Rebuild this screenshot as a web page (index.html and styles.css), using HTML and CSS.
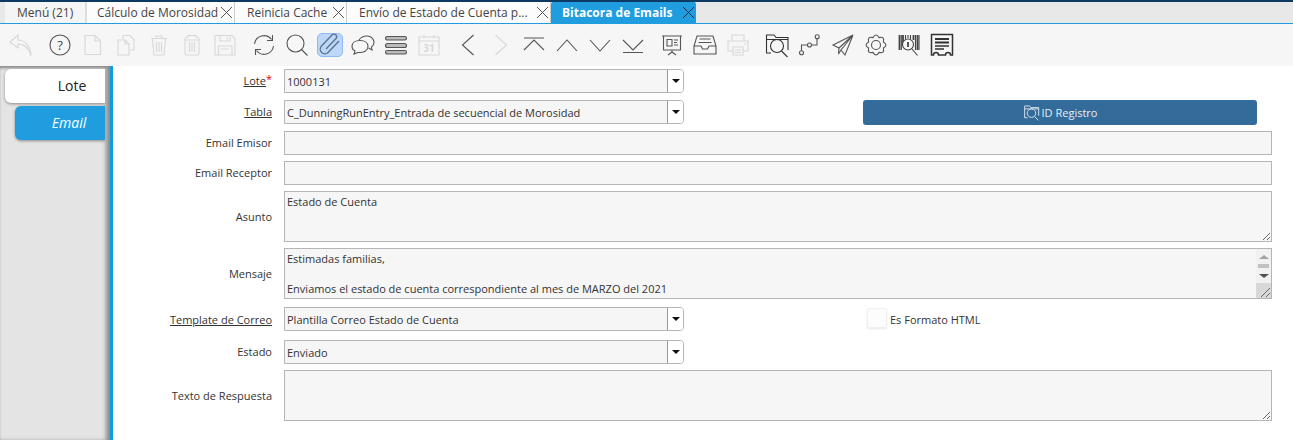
FILE: index.html
```html
<!DOCTYPE html>
<html lang="es">

<head>
    <meta charset="UTF-8">
    <title>Bitacora de Emails</title>
    <link rel="stylesheet" href="styles.css">
</head>

<body>
    <!-- pestañas -->
    <div class="tabs">
        <div class="tab tab-menu">Menú (21)</div>
        <div class="tab tab-a">Cálculo de Morosidad
            <svg class="close" viewBox="0 0 13 13"><path d="M1 1 L12 12 M12 1 L1 12" /></svg>
        </div>
        <div class="tab tab-b">Reinicia Cache
            <svg class="close" viewBox="0 0 13 13"><path d="M1 1 L12 12 M12 1 L1 12" /></svg>
        </div>
        <div class="tab tab-c">Envío de Estado de Cuenta p...
            <svg class="close" viewBox="0 0 13 13"><path d="M1 1 L12 12 M12 1 L1 12" /></svg>
        </div>
        <div class="tab current">Bitacora de Emails
            <svg class="close" viewBox="0 0 13 13"><path d="M1 1 L12 12 M12 1 L1 12" /></svg>
        </div>
    </div>

    <!-- barra de herramientas -->
    <div class="toolbar">
        <span class="slot"><svg class="ico off" viewBox="0 0 26 26"><path d="M10 3 L2 10 L10 16 V12 C16 12 21 16 23 24 C23 15 17 8 10 8 Z" /></svg></span>
        <span class="slot sep"><svg class="ico" viewBox="0 0 26 26"><circle cx="13" cy="13" r="10" /><text x="13" y="17.5" class="ico-q">?</text></svg></span>
        <span class="slot"><svg class="ico off" viewBox="0 0 26 26"><path d="M5 3.5 H15 L20.5 9 V22.5 H5 Z M15 3.5 V9 H20.5" /></svg></span>
        <span class="slot"><svg class="ico off" viewBox="0 0 26 26"><path d="M10 7 V3.5 H17 L21 7.5 V18 H17 M5 8 H12 L16 12 V23 H5 Z M12 8 V12 H16" /></svg></span>
        <span class="slot"><svg class="ico off" viewBox="0 0 26 26"><path d="M5 6.5 H21 M10 6 V4 H16 V6 M6.5 7 L8 23 H18 L19.5 7 M10.5 10 V20 M13 10 V20 M15.5 10 V20" /></svg></span>
        <span class="slot"><svg class="ico off" viewBox="0 0 26 26"><path d="M6 7 C6 5 8 5 9 5 V3.5 H17 V5 C18 5 20 5 20 7 V21 C20 22.5 19 23 18 23 H8 C7 23 6 22.5 6 21 Z M6 8 H20 M10.5 10 V20 M13 10 V20 M15.5 10 V20" /></svg></span>
        <span class="slot"><svg class="ico off" viewBox="0 0 26 26"><path d="M3 3.5 H20 L23 6.5 V23 H3 Z M8 3.5 V9 H18 V3.5 M15 5 V7.5 M6.5 14 H20 V23 H6.5 Z M9 17 H17" /></svg></span>
        <span class="slot sep"><svg class="ico" viewBox="0 0 26 26"><path d="M3.5 12 A9.5 9.5 0 0 1 20.5 7.5 M21.5 3 V8.5 H16 M22.5 14 A9.5 9.5 0 0 1 5.5 18.5 M4.5 23 V17.5 H10" /></svg></span>
        <span class="slot"><svg class="ico" viewBox="0 0 26 26"><circle cx="11.5" cy="11.5" r="8.5" /><path d="M17.5 17.5 L23.5 23.5" /></svg></span>
        <span class="slot active"><svg class="ico clip" viewBox="0 0 26 26"><path d="M9 17 L19 6.5 A2.6 2.6 0 0 0 15 3 L4.5 14 A4.6 4.6 0 0 0 11 20.5 L22 9" /></svg></span>
        <span class="slot"><svg class="ico" viewBox="0 0 26 26"><path d="M10 8.5 C5 8.5 2 11 2 14.5 C2 16.5 3 18 5 19 L4 22 L8 20.5 C14 21 18 18.5 18 14.5 C18 11 15 8.5 10 8.5 Z M9 8 C11 5 14 4 17 4 C21 4 24 7 24 10.5 C24 12.5 23 14 21.5 15 L22 18 L18.5 16" /></svg></span>
        <span class="slot"><svg class="ico bars" viewBox="0 0 26 26"><rect x="2.5" y="4.5" width="21" height="3.5" rx="1.7" /><rect x="2.5" y="11.5" width="21" height="4" rx="2" /><rect x="2.5" y="18.5" width="21" height="3.5" rx="1.7" /></svg></span>
        <span class="slot"><svg class="ico off" viewBox="0 0 26 26"><path d="M3 5 H23 V23 H3 Z M3 9 H23 M8 3 V6 M18 3 V6" /><text x="13" y="20" class="ico-cal">31</text></svg></span>
        <span class="slot sep"><svg class="ico" viewBox="0 0 26 26"><path d="M18.5 3 L7.5 13 L18.5 23" /></svg></span>
        <span class="slot"><svg class="ico off" viewBox="0 0 26 26"><path d="M7.5 3 L18.5 13 L7.5 23" /></svg></span>
        <span class="slot"><svg class="ico" viewBox="0 0 26 26"><path d="M3 6 H23 M3 18 L13 8 L23 18" /></svg></span>
        <span class="slot"><svg class="ico" viewBox="0 0 26 26"><path d="M3 19 L13 8 L23 19" /></svg></span>
        <span class="slot"><svg class="ico" viewBox="0 0 26 26"><path d="M3 8 L13 19 L23 8" /></svg></span>
        <span class="slot"><svg class="ico" viewBox="0 0 26 26"><path d="M3 8 L13 18 L23 8 M3 20.5 H23" /></svg></span>
        <span class="slot sep"><svg class="ico" viewBox="0 0 26 26"><path d="M3 4 H23 M4.5 4 V18 H21.5 V4 M8 7.5 H13 V14 H8 Z M15 8 H19 M15 10.5 H18 M15 13 H19 M13 18 V20 M13 20 L9 23 M13 20 L17 23" /></svg></span>
        <span class="slot"><svg class="ico" viewBox="0 0 26 26"><path d="M5 4 H21 L24 14 V22 H2 V14 Z M2 14 H9 L10.5 17 H15.5 L17 14 H24 M7.5 7 H18.5 M6.5 10.5 H19.5" /></svg></span>
        <span class="slot"><svg class="ico off" viewBox="0 0 26 26"><path d="M7 9 V3 H19 V9 M8 19 H3 V9 H23 V19 H18 M8 15 H18 V23 H8 Z M10 18 H16 M10 20.5 H16 M19 12 H21" /></svg></span>
        <span class="slot sep"><svg class="ico dark" viewBox="0 0 26 26"><path d="M7 21 H2.5 V3 H10 L12 5.5 H24 V18 M2.5 7.5 H24" /><circle cx="13" cy="14" r="6.5" /><path d="M17.5 19 L23.5 25" /></svg></span>
        <span class="slot"><svg class="ico" viewBox="0 0 26 26"><circle cx="4.5" cy="20.7" r="2" /><circle cx="12.5" cy="13" r="2" /><circle cx="20.2" cy="4.7" r="2" /><path d="M4.5 18.7 V13 H10.5 M14.5 13 H20 V6.7" /></svg></span>
        <span class="slot"><svg class="ico" viewBox="0 0 26 26"><path d="M23 3 L3 13 L9 16 Z M23 3 L15 23 L11 18 Z M23 3 L9 16 L8.5 22 L11 18" /></svg></span>
        <span class="slot"><svg class="ico" viewBox="0 0 26 26"><path d="M20.39 9.94 Q25.5 13 20.39 16.06 Q21.84 21.84 16.06 20.39 Q13 25.5 9.94 20.39 Q4.16 21.84 5.61 16.06 Q.5 13 5.61 9.94 Q4.16 4.16 9.94 5.61 Q13 .5 16.06 5.61 Q21.84 4.16 20.39 9.94 Z" /><circle cx="13" cy="13" r="4.5" /></svg></span>
        <span class="slot"><svg class="ico code" viewBox="0 0 26 26"><path class="thick" d="M3.5 3 V18 M7 3 V14 M17.5 3 V8 M21.5 3 V18" /><path d="M5.3 3 V18 M9.5 3 V7 M12 3 V6 M14.5 3 V7 M19.5 3 V18 M23 3 V18" /><circle class="hole" cx="12" cy="12.5" r="5.5" /><path class="thick" d="M12 10 V15" /><path d="M16 17 L21.5 23.5" /></svg></span>
        <span class="slot"><svg class="ico dark receipt" viewBox="0 0 26 26"><path d="M2.5 2.5 H23.5 V23 H21.5 A2.5 2.5 0 0 0 16.5 23 H9.5 A2.5 2.5 0 0 0 4.5 23 H2.5 Z" /><path class="thick" d="M6 7 H20 M6 10.5 H20" /><path d="M6 14 H20 M6 17 H15" /></svg></span>
    </div>

    <div class="content">
        <!-- pestañas laterales -->
        <div class="side">
            <div class="side-tab">Lote</div>
            <div class="side-tab sub">Email</div>
        </div>

        <div class="form">
            <div class="row up2">
                <label><span class="link">Lote</span><em>*</em></label>
                <div class="combo"><span class="combo-val">1000131</span><span class="combo-btn"></span></div>
            </div>
            <div class="row mt7 up1">
                <label><span class="link">Tabla</span></label>
                <div class="combo"><span class="combo-val">C_DunningRunEntry_Entrada de secuencial de Morosidad</span><span class="combo-btn"></span></div>
                <button class="btn">
                    <svg class="btn-ico" viewBox="0 0 26 26"><path d="M7 21 H2.5 V3 H10 L12 5.5 H24 V18 M2.5 7.5 H24" /><circle cx="13" cy="14" r="6.5" /><path d="M17.5 19 L23.5 25" /></svg>
                    ID Registro
                </button>
            </div>
            <div class="row mt7 up1">
                <label>Email Emisor</label>
                <div class="input"></div>
            </div>
            <div class="row up1">
                <label>Email Receptor</label>
                <div class="input"></div>
            </div>
            <div class="row">
                <label>Asunto</label>
                <textarea class="area" readonly>Estado de Cuenta</textarea>
            </div>
            <div class="row">
                <label>Mensaje</label>
                <div class="area-wrap">
                    <textarea class="area" readonly>Estimadas familias,

Enviamos el estado de cuenta correspondiente al mes de MARZO del 2021

Atentamente,
Administración</textarea>
                    <div class="sbar">
                        <span class="sbar-btn"><i class="arrow-up"></i></span>
                        <span class="sbar-thumb"></span>
                        <span class="sbar-btn"><i class="arrow-down"></i></span>
                        <span class="sbar-corner">
                            <svg viewBox="0 0 15 15"><path d="M5 14 L14 5 M10 14 L14 10" /></svg>
                        </span>
                    </div>
                </div>
            </div>
            <div class="row mt8">
                <label><span class="link">Template de Correo</span></label>
                <div class="combo"><span class="combo-val">Plantilla Correo Estado de Cuenta</span><span class="combo-btn"></span></div>
                <div class="check"><span class="check-box"></span>Es Formato HTML</div>
            </div>
            <div class="row mt9 up1">
                <label>Estado</label>
                <div class="combo"><span class="combo-val">Enviado</span><span class="combo-btn"></span></div>
            </div>
            <div class="row">
                <label>Texto de Respuesta</label>
                <textarea class="area" readonly></textarea>
            </div>
        </div>
    </div>
</body>

</html>
```

FILE: styles.css
```css
* {
    padding: 0;
    margin: 0;
    box-sizing: border-box;
}

html,
body {
    height: 100%;
    overflow: hidden;
}

body {
    display: flex;
    flex-direction: column;
    background: #fff;
    font-family: "Open Sans", "Noto Sans", sans-serif;
    font-size: 11px;
    color: #333;
}

/* pestañas */
.tabs {
    display: flex;
    height: 24px;
    padding-left: 5px;
    border-top: 2px solid #0d3a63;
    border-bottom: 1px solid #1f9ddf;
    background: #e8e8e8;
    font-size: 12px;
}

.tab {
    display: flex;
    align-items: center;
    justify-content: space-between;
    padding: 0 1px 0 12px;
    border-right: 1px solid #ccc;
    background: #fcfcfc;
    color: #444;
    white-space: nowrap;
}

.tab-menu {
    width: 82px;
    background: #f5f5f5;
    border-right: 2px solid #ddd;
}

.tab-a {
    width: 148px;
    padding-left: 10px;
}

.tab-b {
    width: 112px;
}

.tab-c {
    width: 204px;
}

.tab.current {
    width: 145px;
    padding-left: 11px;
    border: 0;
    border-radius: 2px 2px 0 0;
    background: #1f9ddf;
    color: #fff;
    font-weight: 700;
}

.close {
    width: 13px;
    height: 13px;
    fill: none;
    stroke: #555;
    stroke-width: 1;
}

.current .close {
    stroke: #123;
}

/* barra de herramientas */
.toolbar {
    display: flex;
    align-items: center;
    height: 42px;
    padding-left: 4px;
    background: #f6f6f6;
}

.slot {
    display: flex;
    align-items: center;
    justify-content: center;
    width: 33px;
    height: 24px;
}

.sep {
    margin-left: 6px;
}

.active {
    width: 26px;
    margin: 0 3.5px;
    border: 1px solid #8fb8f2;
    border-radius: 5px;
    background: #bcd7f9;
}

.ico {
    flex: none;
    width: 26px;
    height: 26px;
    fill: none;
    stroke: #555;
    stroke-width: 1.1;
}

.ico.off {
    stroke: #d8d8d8;
}

.ico.dark {
    stroke: #333;
}

.ico.code {
    stroke: #444;
}

.ico.receipt {
    stroke-width: 1.5;
}

.ico .thick {
    stroke-width: 1.8;
}

.ico .hole {
    fill: #f6f6f6;
}

.ico.clip {
    stroke: #5c7391;
    stroke-width: 1.4;
}

.ico.bars rect {
    fill: #bbb;
}

.ico text {
    stroke: none;
    text-anchor: middle;
    font-family: "Open Sans", sans-serif;
}

.ico-q {
    fill: #444;
    font-size: 13px;
}

.ico-cal {
    fill: #d8d8d8;
    font-size: 10px;
    font-weight: 700;
}

/* contenido */
.content {
    display: flex;
    flex: 1;
}

.side {
    display: flex;
    flex-direction: column;
    gap: 3px;
    width: 113px;
    padding: 3px 5px 0 5px;
    border-right: 3px solid #109ae0;
    background: #e4e4e4;
    box-shadow: inset -5px 0 4px -1px #8c8c8c, inset 0 3px 3px -1px #8c8c8c;
}

.side-tab {
    display: flex;
    align-items: center;
    justify-content: center;
    height: 34px;
    padding-bottom: 2px;
    padding-left: 34px;
    border-radius: 6px 0 0 6px;
    background: #fff;
    color: #222;
    font-size: 14px;
    box-shadow: 0 1px 3px #888;
}

.side-tab.sub {
    margin-left: 10px;
    padding-left: 18px;
    background: #1f9ddf;
    color: #fff;
    font-style: italic;
    font-weight: 500;
}

.form {
    display: flex;
    flex: 1;
    flex-direction: column;
    gap: 6px;
    padding: 3px 21px 0 0;
}

.row {
    display: flex;
    align-items: center;
}

.mt7 {
    margin-top: 1px;
}

.mt8 {
    margin-top: 2px;
}

.mt9 {
    margin-top: 3px;
}

.row label {
    flex: none;
    width: 159px;
    margin-right: 12px;
    text-align: right;
}

.up1 label {
    padding-bottom: 2px;
}

.up2 label {
    padding-bottom: 4px;
}

.link {
    text-decoration: underline;
}

.row label em {
    color: #e00;
    font-style: normal;
    display: inline-block;
    vertical-align: 2px;
}

.combo {
    display: flex;
    flex: none;
    width: 400px;
    height: 24px;
    border: 1px solid #b5b5b5;
    border-radius: 0 4px 4px 0;
    background: #f6f6f6;
}

.combo-val {
    flex: 1;
    padding-left: 2px;
    line-height: 24px;
}

.combo-btn {
    display: flex;
    flex-direction: column;
    align-items: center;
    justify-content: center;
    width: 16px;
    border-left: 1px solid #999;
    border-radius: 0 3px 3px 0;
    background: #fff;
}

.combo-btn::before {
    content: "";
    border-top: 4px solid #111;
    border-left: 4px solid transparent;
    border-right: 4px solid transparent;
}

.input {
    flex: 1;
    height: 24px;
    border: 1px solid #b5b5b5;
    background: #f6f6f6;
}

.area {
    flex: 1;
    display: block;
    height: 51px;
    padding: 2px;
    border: 1px solid #b5b5b5;
    background: #f6f6f6;
    color: #333;
    font-family: inherit;
    font-size: 11px;
    line-height: 15px;
    outline: 0;
}

.area-wrap {
    flex: 1;
    display: flex;
    position: relative;
}

.area-wrap .area {
    overflow: hidden;
}

/* barra de scroll sobre el textarea */
.sbar {
    position: absolute;
    top: 1px;
    right: 1px;
    bottom: 1px;
    display: flex;
    flex-direction: column;
    width: 15px;
    background: #f1f1f1;
}

.sbar-btn {
    display: flex;
    flex: none;
    align-items: center;
    justify-content: center;
    height: 15px;
}

.arrow-up {
    border-bottom: 4px solid #a3a3a3;
    border-left: 5px solid transparent;
    border-right: 5px solid transparent;
}

.arrow-down {
    border-top: 4px solid #505050;
    border-left: 5px solid transparent;
    border-right: 5px solid transparent;
}

.sbar-thumb {
    flex: none;
    height: 4px;
    margin: 0 2px;
    background: #c1c1c1;
}

.sbar-corner {
    flex: 1;
    background: #d8d8d8;
}

.sbar-corner svg {
    display: block;
    width: 15px;
    height: 15px;
    fill: none;
    stroke: #666;
    stroke-width: 1;
}

.btn {
    display: flex;
    align-self: flex-start;
    align-items: center;
    justify-content: center;
    gap: 2px;
    width: 394px;
    height: 25px;
    margin-left: 179px;
    margin-bottom: -1px;
    border: 0;
    border-radius: 3px;
    background: #336b9b;
    color: #e6edf3;
    font-family: inherit;
    font-size: 11px;
}

.btn-ico {
    width: 17px;
    height: 17px;
    fill: none;
    stroke: #d5e0ea;
    stroke-width: 1.5;
}

.check {
    display: flex;
    align-items: center;
    gap: 3px;
    margin-left: 183px;
}

.check-box {
    width: 20px;
    height: 20px;
    margin-top: -2px;
    border: 1px solid #f0f0f0;
    border-radius: 2px;
    background: #fcfcfc;
    box-shadow: 0 1px 2px #e8e8e8;
}
```
